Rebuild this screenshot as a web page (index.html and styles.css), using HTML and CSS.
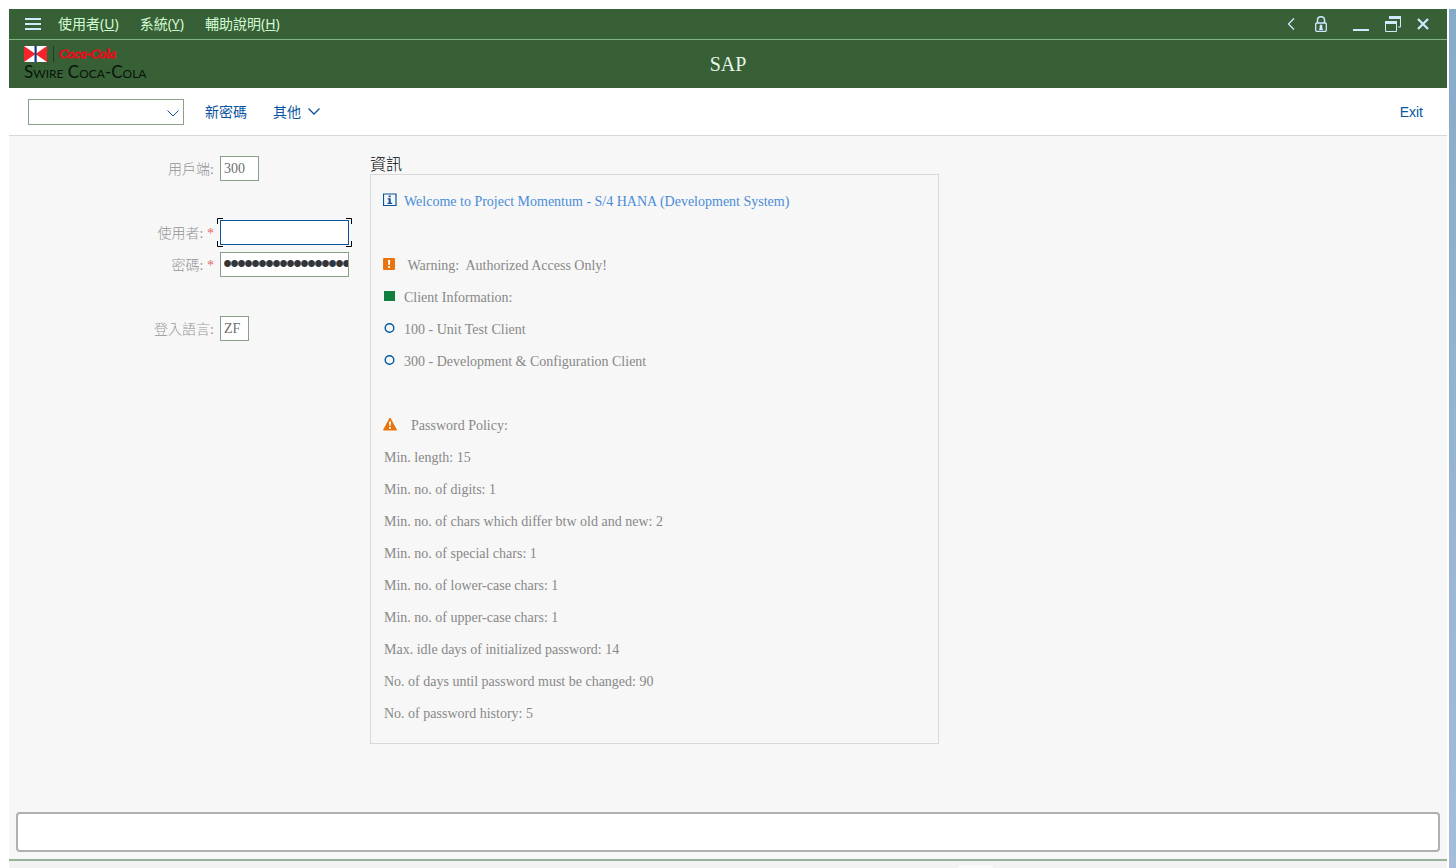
FILE: index.html
```html
<!DOCTYPE html>
<html lang="zh-Hant">
<head>
<meta charset="utf-8">
<meta name="viewport" content="width=device-width, initial-scale=1">
<title>SAP</title>
<link rel="stylesheet" href="styles.css">
</head>
<body>
<div class="desktop">
<div class="window">
  <header class="menubar">
    <nav class="menus">
      <button class="icon-btn" aria-label="Menu"><svg width="16" height="12" viewBox="0 0 16 12"><path d="M0 1h16M0 6h16M0 11h16" stroke="#d1e8ff" stroke-width="2"/></svg></button>
      <button class="menu">使用者(<u>U</u>)</button>
      <button class="menu">系統(<u>Y</u>)</button>
      <button class="menu">輔助說明(<u>H</u>)</button>
    </nav>
    <div class="controls">
      <button class="icon-btn" aria-label="Back"><svg width="8" height="12" viewBox="0 0 8 12"><path d="M7 .5L1.500 6 7 11.500" fill="none" stroke="#d1e8ff" stroke-width="1.300"/></svg></button>
      <button class="icon-btn lock" aria-label="Security"><svg width="12" height="16" viewBox="0 0 12 16"><path d="M2.500 7V4Q2.500 .8 6 .8T9.500 4V7" fill="none" stroke="#d1e8ff" stroke-width="1.500"/><rect x=".7" y="7" width="10.600" height="8.300" rx="1" fill="none" stroke="#d1e8ff" stroke-width="1.300"/><path d="M6 8.500a1.600 1.600 0 0 1 1.200 2.500L8 14H4l.8-3A1.600 1.600 0 0 1 6 8.500" fill="#d1e8ff"/></svg></button>
      <button class="icon-btn" aria-label="Minimize"><svg width="16" height="16" viewBox="0 0 16 16"><path d="M0 14h16" stroke="#d1e8ff" stroke-width="2"/></svg></button>
      <button class="icon-btn" aria-label="Restore"><svg width="16" height="16" viewBox="0 0 16 16"><path d="M4 1.500h11.500V11H13" fill="none" stroke="#d1e8ff"/><path d="M4 0h12v3H4zM0 5h12v3H0z" fill="#d1e8ff"/><path d="M.5 6v9.500h11V6" fill="none" stroke="#d1e8ff"/></svg></button>
      <button class="icon-btn" aria-label="Close"><svg width="12" height="12" viewBox="0 0 12 12"><path d="M1 1l10 10M11 1L1 11" stroke="#d1e8ff" stroke-width="2.200"/></svg></button>
    </div>
  </header>

  <div class="titlebar">
    <div class="logo">
      <div class="logo-top">
        <svg width="34" height="16" viewBox="0 0 34 16"><path d="M0 0h23v16H0z" fill="#fff"/><path d="M0 0l11.500 8L0 16zM23 0L11.500 8 23 16z" fill="#f6232b"/><path d="M10.500 0h2.200v16h-2.200z" fill="#173a86"/><path d="M29.500 0v16" stroke="#1d3d1e"/></svg>
        <span class="script">Coca‑Cola</span>
      </div>
      <div class="brand">Swire Coca-Cola</div>
    </div>
    <h1 class="title">SAP</h1>
  </div>

  <div class="toolbar">
    <div class="command">
      <select class="command-select" aria-label="Command"><option></option></select>
      <svg class="command-arrow" width="12" height="7" viewBox="0 0 12 7"><path d="M.5.5L6 6 11.500.5" fill="none" stroke="#0854a0"/></svg>
    </div>
    <button class="tool">新密碼</button>
    <button class="tool more">其他<svg width="12" height="7" viewBox="0 0 12 7"><path d="M.5.5L6 6 11.500.5" fill="none" stroke="#0854a0" stroke-width="1.300"/></svg></button>
    <button class="tool exit">Exit</button>
  </div>

  <main class="content">
    <form class="login">
      <div class="row"><label for="client">用戶端:</label><input class="field client" id="client" type="text" value="300"></div>
      <div class="row"></div>
      <div class="row"><label for="user">使用者: <span class="req">*</span></label>
        <span class="focus"><input class="field wide active" id="user" type="text">
          <svg class="corners" viewBox="0 0 135 29"><path d="M.5 6V.5H6M129 .5h5.500V6M134.500 23v5.500H129M6 28.500H.5V23" fill="none" stroke="#000"/></svg></span></div>
      <div class="row"><label for="pass">密碼: <span class="req">*</span></label><input class="field wide secret" id="pass" type="password" value="********************"></div>
      <div class="row"></div>
      <div class="row"><label for="lang">登入語言:</label><input class="field lang" id="lang" type="text" value="ZF"></div>
    </form>

    <section class="info">
      <h2 class="info-title">資訊</h2>
      <div class="panel">
        <p class="line link"><svg class="mark" width="14" height="14" viewBox="0 0 14 14"><path d="M.5 1h12.500v11.500H.5z" fill="none" stroke="#0854a0" stroke-width="1.200"/><path d="M5.700 2.500h2v1.800h-2zM4.700 5.300h3v4.400h1.500V11H4.500V9.700h1.200V6.500h-1z" fill="#0854a0"/></svg>Welcome to Project Momentum - S/4 HANA (Development System)</p>
        <p class="line"></p>
        <p class="line"><svg class="mark" width="14" height="14" viewBox="0 0 14 14"><rect y="1" width="12" height="12" rx="1" fill="#e9730c"/><path d="M5 3h2.200l-.4 5H5.400zM5.200 9h1.800v2H5.200z" fill="#fff"/></svg>&nbsp;Warning:&nbsp; Authorized Access Only!</p>
        <p class="line"><svg class="mark" width="14" height="14" viewBox="0 0 14 14"><path d="M1 2h11v10H1z" fill="#107e3e"/></svg>Client Information:</p>
        <p class="line"><svg class="mark" width="14" height="14" viewBox="0 0 14 14"><circle cx="6.500" cy="7" r="4.300" fill="none" stroke="#0854a0" stroke-width="1.400"/></svg>100 - Unit Test Client</p>
        <p class="line"><svg class="mark" width="14" height="14" viewBox="0 0 14 14"><circle cx="6.500" cy="7" r="4.300" fill="none" stroke="#0854a0" stroke-width="1.400"/></svg>300 - Development &amp; Configuration Client</p>
        <p class="line"></p>
        <p class="line"><svg class="mark" width="14" height="14" viewBox="0 0 14 14"><path d="M7 1l6.500 12H.5z" fill="#e9730c" stroke="#e9730c" stroke-linejoin="round"/><path d="M6 4.500h2L7.600 9H6.400zM6.100 10h1.800v1.700H6.100z" fill="#fff"/></svg>&nbsp;&nbsp;Password Policy:</p>
        <p class="line">Min. length: 15</p>
        <p class="line">Min. no. of digits: 1</p>
        <p class="line">Min. no. of chars which differ btw old and new: 2</p>
        <p class="line">Min. no. of special chars: 1</p>
        <p class="line">Min. no. of lower-case chars: 1</p>
        <p class="line">Min. no. of upper-case chars: 1</p>
        <p class="line">Max. idle days of initialized password: 14</p>
        <p class="line">No. of days until password must be changed: 90</p>
        <p class="line">No. of password history: 5</p>
      </div>
    </section>
  </main>

  <div class="message"></div>
  <footer class="status"><span class="tab"></span></footer>
</div>
<div class="edge"></div>
</div>
</body>
</html>
```

FILE: styles.css
```css
* { box-sizing: border-box; }
body { margin: 0; background: #fff; font-family: "Liberation Serif", "Noto Sans CJK TC", serif; font-size: 14px; }
button { border: 0; padding: 0; background: none; font: inherit; color: inherit; cursor: pointer; }
svg { display: block; flex: none; }
.desktop { display: flex; gap: 2px; height: 100vh; padding: 9px 0 0 9px; overflow: hidden; }
.window { flex: 1; display: flex; flex-direction: column; background: #f7f7f7; }
.edge { width: 7px; background: linear-gradient(#86abc8, #a5bdd8); }

.menubar { display: flex; justify-content: space-between; align-items: center; height: 31px; padding: 0 18px 0 16px; background: #376037; border-bottom: 1px solid #82b482; color: #d3fbd3; font-family: "Noto Sans", "Noto Sans CJK TC", sans-serif; }
.menus { display: flex; align-items: center; gap: 21px; }
.menus .icon-btn { margin-right: -4px; }
.menu { line-height: 20px; }
.controls { display: flex; align-items: center; gap: 16px; }
.controls .icon-btn:first-child { margin-right: 4px; }
.lock { margin-right: 10px; }

.titlebar { display: grid; grid-template-columns: 1fr auto 1fr; align-items: center; height: 48px; padding: 0 15px; background: #376037; }
.title { margin: 0; font-size: 20px; font-weight: 400; line-height: 28px; color: #e6f5e6; }
.logo-top { display: flex; align-items: center; gap: 1px; height: 16px; }
.script { font-size: 13px; font-style: italic; line-height: 16px; color: #e3101b; white-space: nowrap; -webkit-text-stroke: 1px #e3101b; }
.brand { font-family: Lato, sans-serif; font-size: 17px; font-variant: small-caps; line-height: 20px; color: #081408; white-space: nowrap; }

.toolbar { display: flex; align-items: center; height: 48px; padding: 0 24px 0 19px; background: #fff; border-bottom: 1px solid #d9d9d9; color: #0854a0; font-family: "Liberation Sans", "Noto Sans CJK TC", sans-serif; }
.command { position: relative; width: 156px; margin-right: 21px; }
.command-select { display: block; width: 100%; height: 26px; border: 1px solid #89a089; border-radius: 0; background: #fff; appearance: none; }
.command-arrow { position: absolute; right: 5px; top: 11px; pointer-events: none; }
.tool { line-height: 20px; }
.more { display: flex; align-items: center; gap: 7px; margin-left: 26px; }
.exit { margin-left: auto; }

.content { flex: 1; display: flex; align-items: flex-start; padding: 16px 20px 16px 0; }
.login { width: 361px; flex: none; }
.row { display: flex; align-items: center; height: 32px; color: #949494; font-weight: 300; }
.row label { width: 205px; margin-right: 6px; text-align: right; }
.req { color: #e06a6a; }
.field { height: 25px; padding: 2px 0 0 3px; border: 1px solid #89a089; border-radius: 0; background: #fff; color: #707070; font: 14px "Liberation Serif", serif; outline: 0; }
.client { width: 39px; }
.lang { width: 29px; }
.wide { width: 129px; display: block; }
.active { border-color: #0854a0; }
.secret { padding-top: 0; font-size: 20px; color: #32363a; -webkit-text-stroke: 2px #32363a; }
.focus { position: relative; }
.corners { position: absolute; left: -3px; top: -2px; width: 135px; height: 29px; pointer-events: none; }

.info { width: 569px; }
.info-title { margin: 0; font-size: 16px; font-weight: 300; line-height: 22px; color: #000; font-family: "Noto Sans CJK TC", sans-serif; }
.panel { padding: 10px 13px 14px; border: 1px solid #d9d9d9; }
.line { display: flex; align-items: center; height: 32px; margin: 0; padding-top: 2px; color: #888; white-space: pre; }
.link { color: #4a8cd8; }
.mark { margin: -5px 7px 0 -1px; }

.message { flex: none; height: 40px; margin: 0 7px; border: 2px solid #b0b0b0; border-radius: 4px; background: #fff; }
.status { flex: none; height: 9px; margin-top: 7px; padding-top: 4px; border-top: 2px solid #98b098; background: #f2f2f2; }
.tab { display: block; width: 35px; height: 3px; margin-left: 66%; border-radius: 3px 3px 0 0; background: #fafafa; }
```
